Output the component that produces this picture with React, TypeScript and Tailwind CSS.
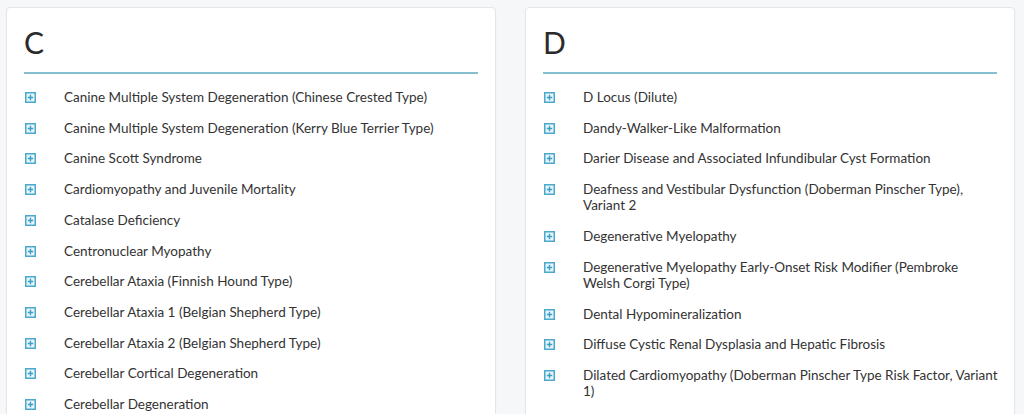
import React from 'react'

const columns = [
  {
    letter: 'C',
    items: [
      'Canine Multiple System Degeneration (Chinese Crested Type)',
      'Canine Multiple System Degeneration (Kerry Blue Terrier Type)',
      'Canine Scott Syndrome',
      'Cardiomyopathy and Juvenile Mortality',
      'Catalase Deficiency',
      'Centronuclear Myopathy',
      'Cerebellar Ataxia (Finnish Hound Type)',
      'Cerebellar Ataxia 1 (Belgian Shepherd Type)',
      'Cerebellar Ataxia 2 (Belgian Shepherd Type)',
      'Cerebellar Cortical Degeneration',
      'Cerebellar Degeneration',
    ],
  },
  {
    letter: 'D',
    items: [
      'D Locus (Dilute)',
      'Dandy-Walker-Like Malformation',
      'Darier Disease and Associated Infundibular Cyst Formation',
      'Deafness and Vestibular Dysfunction (Doberman Pinscher Type), Variant 2',
      'Degenerative Myelopathy',
      'Degenerative Myelopathy Early-Onset Risk Modifier (Pembroke Welsh Corgi Type)',
      'Dental Hypomineralization',
      'Diffuse Cystic Renal Dysplasia and Hepatic Fibrosis',
      'Dilated Cardiomyopathy (Doberman Pinscher Type Risk Factor, Variant 1)',
    ],
  },
]

function PlusBox() {
  return (
    <svg width="11" height="11" viewBox="0 0 11 11" className="shrink-0 mt-[3px]">
      <rect x="0.75" y="0.75" width="9.5" height="9.5" fill="#eaf5fa" stroke="#4ba9cc" strokeWidth="1.5" />
      <path d="M5.5 2.8v5.4M2.8 5.5h5.4" stroke="#3a9fc4" strokeWidth="1.4" />
    </svg>
  )
}

export default function App() {
  return (
    <div className="min-h-[414px] bg-[#f6f7f9] flex gap-[29px] pl-[6px] pr-[9px] pt-[7px] font-['Lato',sans-serif]">
      {columns.map((col) => (
        <div
          key={col.letter}
          className="w-[490px] h-[420px] overflow-hidden bg-white border border-[#e4e6ea] rounded-[4px] shadow-[0_1px_2px_rgba(0,0,0,0.04)] px-[17px] pt-[18px]"
        >
          <h2 className="text-[30px] leading-[33px] text-[#2a2a2a] font-normal">{col.letter}</h2>
          <div className="mt-[13px] h-[2px] bg-[#86bfd0]" />
          <ul className="mt-[15px] -mr-[1px]">
            {col.items.map((item) => (
              <li key={item} className="flex items-start mb-[14.5px]">
                <div className="w-[40px] shrink-0 pl-[1px]">
                  <PlusBox />
                </div>
                <span className="text-[13.5px] leading-[16.2px] text-[#333]">{item}</span>
              </li>
            ))}
          </ul>
        </div>
      ))}
    </div>
  )
}
